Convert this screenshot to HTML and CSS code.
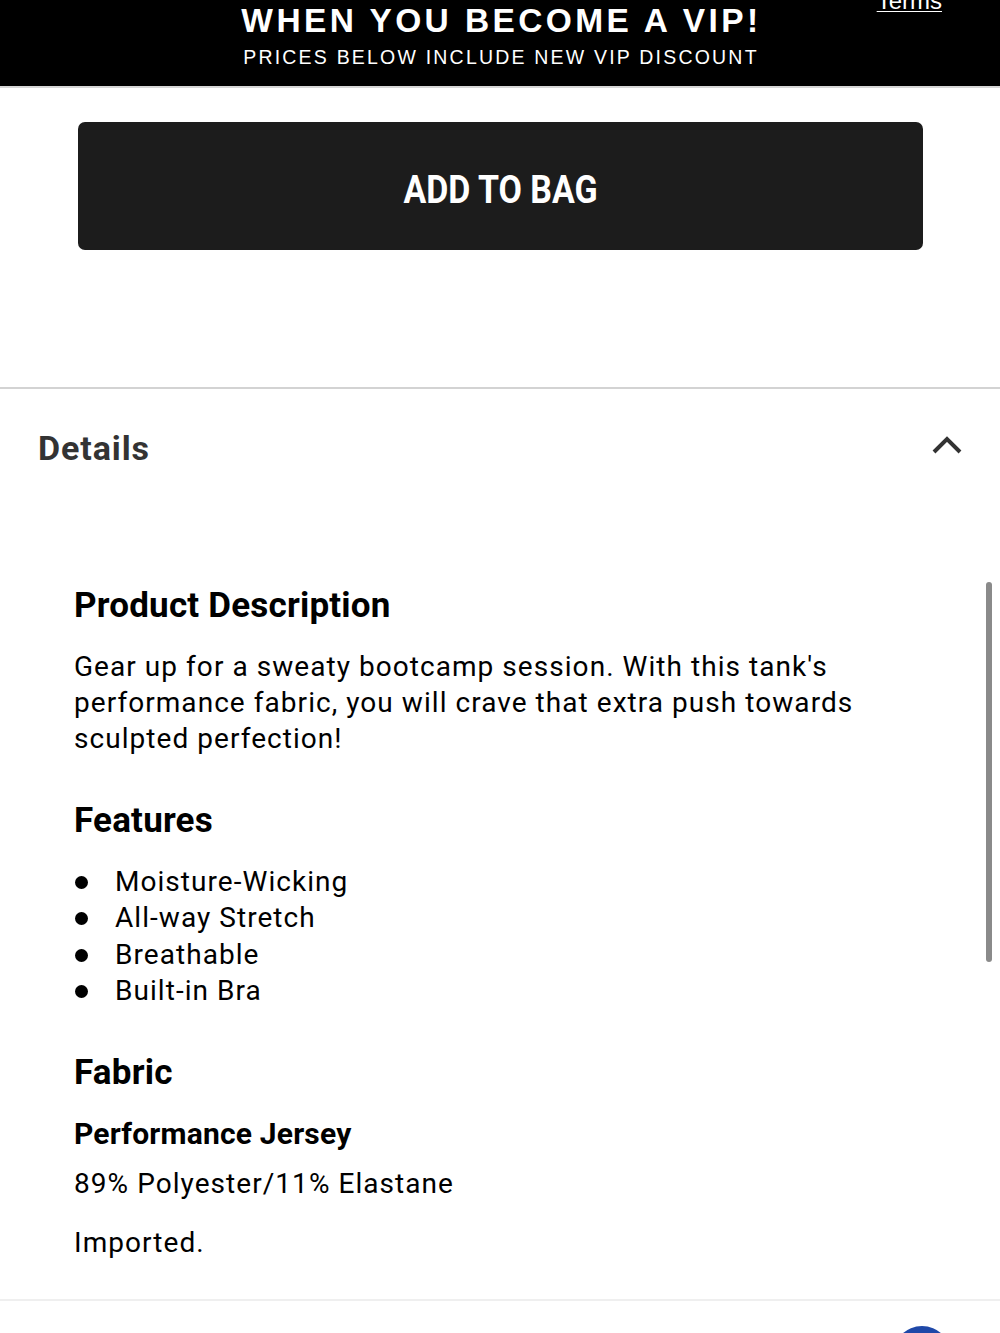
FILE: index.html
```html
<!DOCTYPE html>
<html lang="en">
<head>
<meta charset="utf-8">
<title>Product details</title>
<link rel="stylesheet" href="styles.css">
</head>
<body>
<div class="page">
  <header class="vip-banner">
    <a class="terms" href="#">Terms</a>
    <div class="vip-title">WHEN YOU BECOME A VIP!</div>
    <div class="vip-sub">PRICES BELOW INCLUDE NEW VIP DISCOUNT</div>
  </header>

  <div class="buy">
    <button class="add-btn" type="button"><span class="add-label">ADD TO BAG</span></button>
  </div>

  <section class="details">
    <div class="details-head">
      <h2 class="details-title">Details</h2>
      <svg class="chevron" width="30" height="20" viewBox="0 0 30 20" aria-hidden="true">
        <polyline points="2,17 15,4 28,17" fill="none" stroke="#333" stroke-width="4" stroke-linecap="butt" stroke-linejoin="miter"/>
      </svg>
    </div>

    <div class="details-body">
      <h3 class="sec-title">Product Description</h3>
      <p class="text">Gear up for a sweaty bootcamp session. With this tank's performance fabric, you will crave that extra push towards sculpted perfection!</p>

      <h3 class="sec-title features-title">Features</h3>
      <ul class="features">
        <li>Moisture-Wicking</li>
        <li>All-way Stretch</li>
        <li>Breathable</li>
        <li>Built-in Bra</li>
      </ul>

      <h3 class="sec-title fabric-title">Fabric</h3>
      <h4 class="sub-title">Performance Jersey</h4>
      <p class="text fabric-text">89% Polyester/11% Elastane</p>
      <p class="text imported">Imported.</p>
    </div>
    <div class="scrollbar"></div>
  </section>

  <div class="footer-line"></div>
  <div class="fab"></div>
</div>
</body>
</html>
```

FILE: styles.css
```css
html, body {
  margin: 0;
  padding: 0;
  background: #fff;
}
body {
  font-family: Roboto, "Liberation Sans", sans-serif;
  color: #000;
  overflow: hidden;
}
.page {
  position: relative;
  width: 1000px;
  height: 1333px;
  overflow: hidden;
}

/* Banner */
.vip-banner {
  position: relative;
  height: 86px;
  background: #000;
  border-bottom: 2px solid #d6d6d6;
  color: #fff;
  text-align: center;
}
.terms {
  position: absolute;
  top: -13px;
  right: 58px;
  color: #fff;
  font-family: "Liberation Sans", sans-serif;
  font-size: 24px;
  text-decoration: underline;
  text-decoration-thickness: 1px;
  text-underline-offset: 2px;
}
.vip-title {
  padding-top: 4px;
  padding-left: 3px;
  font-family: "Liberation Sans", sans-serif;
  font-weight: 700;
  font-size: 33.5px;
  line-height: 34px;
  letter-spacing: 3.4px;
}
.vip-sub {
  margin-top: 8px;
  padding-left: 2px;
  font-family: "Liberation Sans", sans-serif;
  font-size: 19.5px;
  line-height: 22px;
  letter-spacing: 2.2px;
}

/* Button */
.buy {
  padding: 34px 77px 0 78px;
  height: 265px;
  box-sizing: border-box;
}
.add-btn {
  display: flex;
  align-items: center;
  justify-content: center;
  width: 100%;
  height: 128px;
  border: none;
  border-radius: 7px;
  background: #1c1c1c;
  color: #fff;
  padding: 7px 0 0 0;
  cursor: pointer;
}
.add-label {
  display: inline-block;
  font-family: Roboto, "Liberation Sans", sans-serif;
  font-weight: 700;
  font-size: 39px;
  transform: scaleX(0.87);
}

/* Details */
.details {
  position: relative;
  border-top: 2px solid #d3d3d3;
  margin-top: 34px;
}
.details-head {
  display: flex;
  align-items: center;
  justify-content: space-between;
  height: 118px;
  padding: 0 38px 0 38px;
  box-sizing: border-box;
}
.details-title {
  margin: 0;
  font-family: Roboto, "Liberation Sans", sans-serif;
  font-weight: 700;
  font-size: 34px;
  letter-spacing: 0.9px;
  color: #333;
}
.chevron {
  display: block;
  margin-top: -6px;
}

.details-body {
  padding: 79px 116px 0 74px;
}
.sec-title {
  margin: 0;
  font-family: Roboto, "Liberation Sans", sans-serif;
  font-weight: 700;
  font-size: 35px;
  line-height: 40px;
  letter-spacing: 0.2px;
}
.text {
  margin: 0;
  font-size: 28px;
  line-height: 36px;
  letter-spacing: 1.05px;
}
.details-body > .sec-title + .text {
  margin-top: 23px;
}
.features-title {
  margin-top: 44px;
}
.features {
  list-style: none;
  margin: 23px 0 0 0;
  padding: 0;
  font-size: 28px;
  line-height: 36.3px;
  letter-spacing: 1.05px;
}
.features li {
  position: relative;
  padding-left: 41px;
}
.features li::before {
  content: "";
  position: absolute;
  left: 1px;
  top: 12px;
  width: 13px;
  height: 13px;
  border-radius: 50%;
  background: #000;
}
.fabric-title {
  margin-top: 44px;
}
.sub-title {
  margin: 24px 0 0 0;
  font-weight: 700;
  font-size: 30px;
  line-height: 34px;
  letter-spacing: 0.2px;
}
.fabric-text {
  margin-top: 15px;
}
.imported {
  margin-top: 23px;
}

.scrollbar {
  position: absolute;
  right: 8px;
  top: 193px;
  width: 6px;
  height: 380px;
  border-radius: 3px;
  background: #8a8a8a;
}

.footer-line {
  position: absolute;
  left: 0;
  right: 0;
  top: 1299px;
  height: 2px;
  background: #efefef;
}
.fab {
  position: absolute;
  left: 893px;
  top: 1326px;
  width: 58px;
  height: 58px;
  border-radius: 50%;
  background: #1f48a8;
}
```
